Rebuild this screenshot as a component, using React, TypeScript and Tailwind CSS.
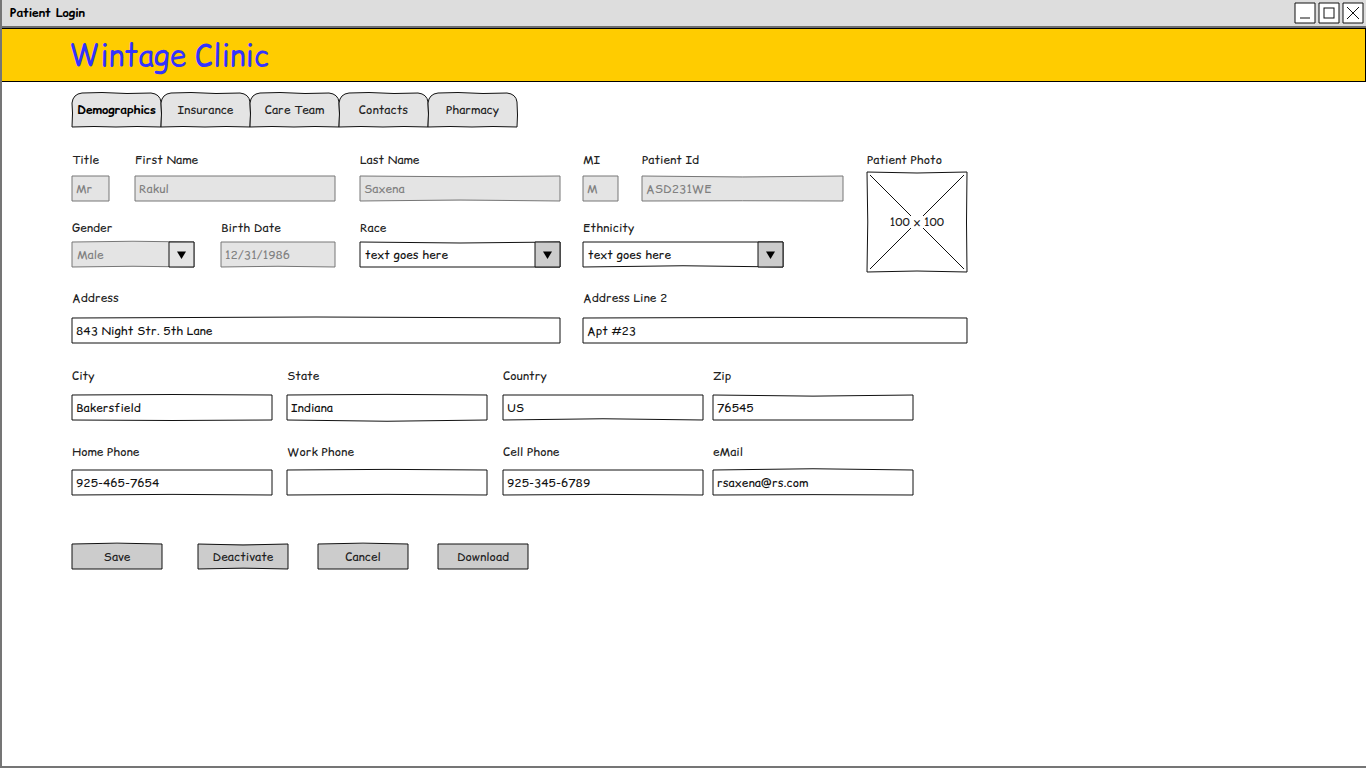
import React, { useId } from "react";

type Bow = [number, number];

type SketchFrameProps = { bow?: Bow; stroke?: string };

/* Hand-drawn outline: the top and bottom strokes bend by the given percentages. */
function SketchFrame({ bow = [0, 0], stroke = "#111111" }: SketchFrameProps) {
  const [top, bottom] = bow;
  return (
    <svg
      aria-hidden="true"
      viewBox="0 0 100 100"
      preserveAspectRatio="none"
      className="pointer-events-none absolute inset-0 h-full w-full overflow-visible"
    >
      <path
        d={`M0 0Q50 ${top} 100 0V100Q50 ${100 + bottom} 0 100Z`}
        fill="none"
        stroke={stroke}
        vectorEffect="non-scaling-stroke"
      />
    </svg>
  );
}

type FieldProps = {
  label: string;
  value: string;
  gap?: string;
  className?: string;
  disabled?: boolean;
  bow?: Bow;
};

function TextField({ label, value, gap = "gap-3", className = "", disabled = false, bow }: FieldProps) {
  const id = useId();
  return (
    <div className={`flex min-w-0 flex-col ${gap} ${className}`}>
      <label htmlFor={id} className="h-4 whitespace-nowrap leading-4">
        {label}
      </label>
      <div className="relative h-[25px]">
        <input
          id={id}
          type="text"
          defaultValue={value}
          disabled={disabled}
          className="block h-full w-full bg-white px-1 text-[#111111] outline-none disabled:bg-[#e4e4e4] disabled:text-[#808080]"
        />
        <SketchFrame bow={bow} stroke={disabled ? "#777777" : "#111111"} />
      </div>
    </div>
  );
}

function SelectField({ label, value, gap = "gap-1.5", className = "", disabled = false, bow }: FieldProps) {
  const id = useId();
  return (
    <div className={`flex min-w-0 flex-col ${gap} ${className}`}>
      <label htmlFor={id} className="h-4 whitespace-nowrap leading-4">
        {label}
      </label>
      <div className="relative h-[25px]">
        <select
          id={id}
          disabled={disabled}
          className="block h-full w-full appearance-none bg-white pl-[5px] pr-7 text-[#111111] opacity-100 outline-none disabled:bg-[#e4e4e4] disabled:text-[#808080]"
        >
          <option>{value}</option>
        </select>
        <SketchFrame bow={bow} stroke={disabled ? "#777777" : "#111111"} />
        <span
          className={`pointer-events-none absolute inset-y-0 right-0 flex w-[25px] items-center justify-center ${
            disabled ? "bg-[#e4e4e4]" : "bg-[#cccccc]"
          }`}
        >
          <svg aria-hidden="true" viewBox="0 0 9 8" className="h-2 w-[9px]">
            <path d="M0 0.5H9L4.5 8Z" fill="#000000" />
          </svg>
          <SketchFrame />
        </span>
      </div>
    </div>
  );
}

function Tab({ label, active = false }: { label: string; active?: boolean }) {
  return (
    <button
      type="button"
      role="tab"
      aria-selected={active}
      className={`relative h-[34px] w-[89px] rounded-t-[10px] bg-[#e4e4e4] text-center ${
        active ? "font-bold text-black" : ""
      }`}
    >
      {label}
      <svg
        aria-hidden="true"
        viewBox="0 0 89 34"
        className="pointer-events-none absolute inset-0 h-full w-full overflow-visible"
      >
        <path
          d="M0 34L0.5 20L0 10Q1 1 10 0L30 -0.5L55 0.5L79 0Q88 1 89 9L89.5 22L89 34L65 33.5L44 34L22 33.5Z"
          fill="none"
          stroke="#111111"
        />
      </svg>
    </button>
  );
}

function ActionButton({ label, bow }: { label: string; bow?: Bow }) {
  return (
    <button type="button" className="relative h-[25px] w-[90px] bg-[#cccccc] text-center">
      {label}
      <SketchFrame bow={bow} />
    </button>
  );
}

function WindowButton({ label, children }: { label: string; children: React.ReactNode }) {
  return (
    <button type="button" aria-label={label} className="relative h-5 w-5 bg-white">
      <svg viewBox="0 0 20 20" className="h-5 w-5" fill="none" stroke="#111111">
        {children}
      </svg>
      <SketchFrame />
    </button>
  );
}

export default function App() {
  return (
    <div className="flex min-h-screen flex-col border-b-2 border-l-2 border-[#757575] bg-white font-['Comic_Relief','Comic_Sans_MS','Comic_Neue',Lato,sans-serif] text-xs text-[#222222]">
      <header className="flex h-7 items-center justify-between border-b-2 border-[#6e6e6e] bg-[#dddddd] pl-2 pr-[3px]">
        <span className="font-bold text-black">Patient Login</span>
        <div className="flex gap-1">
          <WindowButton label="Minimize">
            <path d="M5 15H15" />
          </WindowButton>
          <WindowButton label="Maximize">
            <rect x="5" y="5" width="10" height="10" />
          </WindowButton>
          <WindowButton label="Close">
            <path d="M4 4L16 16M16 4L4 16" />
          </WindowButton>
        </div>
      </header>

      <div className="flex h-[54px] items-center border border-l-0 border-black bg-[#ffcc00] pl-[67px]">
        <h1 className="text-3xl leading-10 text-[#3333ff]">Wintage Clinic</h1>
      </div>

      <main className="px-[70px] pt-[11px]">
        <div role="tablist" className="flex">
          <Tab label="Demographics" active />
          <Tab label="Insurance" />
          <Tab label="Care Team" />
          <Tab label="Contacts" />
          <Tab label="Pharmacy" />
        </div>

        <form className="mt-[25px]" onSubmit={(e) => e.preventDefault()}>
          <div className="grid max-w-[895px] grid-cols-[771fr_100fr] gap-6">
            <div className="flex flex-col gap-[19px]">
              <div className="grid grid-cols-[263fr_483fr] gap-[25px]">
                <div className="grid grid-cols-[37fr_200fr] gap-[26px]">
                  <TextField label="Title" value="Mr" gap="gap-2" disabled />
                  <TextField label="First Name" value="Rakul" gap="gap-2" disabled />
                </div>
                <div className="grid grid-cols-[200fr_260fr] gap-[23px]">
                  <TextField label="Last Name" value="Saxena" gap="gap-2" disabled bow={[6, -8]} />
                  <div className="grid grid-cols-[35fr_201fr] gap-6">
                    <TextField label="MI" value="M" gap="gap-2" disabled />
                    <TextField label="Patient Id" value="ASD231WE" gap="gap-2" disabled bow={[8, -2]} />
                  </div>
                </div>
              </div>
              <div className="grid grid-cols-[263fr_483fr] gap-[25px]">
                <div className="grid grid-cols-[122fr_114fr] gap-[27px]">
                  <SelectField label="Gender" value="Male" disabled bow={[-6, -6]} />
                  <TextField label="Birth Date" value="12/31/1986" gap="gap-1.5" disabled bow={[0, -6]} />
                </div>
                <div className="grid grid-cols-[200fr_260fr] gap-[23px]">
                  <SelectField label="Race" value="text goes here" bow={[8, 0]} />
                  <SelectField label="Ethnicity" value="text goes here" className="max-w-[200px]" bow={[0, -10]} />
                </div>
              </div>
            </div>
            <figure className="flex flex-col gap-1">
              <figcaption className="h-4 whitespace-nowrap">Patient Photo</figcaption>
              <div className="relative flex h-[100px] items-center justify-center">
                <svg
                  aria-hidden="true"
                  viewBox="0 0 100 100"
                  preserveAspectRatio="none"
                  className="absolute inset-0 h-full w-full overflow-visible"
                  fill="none"
                  stroke="#111111"
                >
                  <path d="M0 0Q50 2 100 0Q99 50 100 100Q50 98 0 100Q1.5 50 0 0Z" />
                  <path d="M3 3L97 97M97 3L3 97" />
                </svg>
                <span className="relative bg-white leading-3">100 x 100</span>
              </div>
            </figure>
          </div>

          <div className="mt-[18px] grid max-w-[895px] grid-cols-[488fr_384fr] gap-[23px]">
            <TextField label="Address" value="843 Night Str. 5th Lane" bow={[-8, 0]} />
            <TextField label="Address Line 2" value="Apt #23" bow={[-5, 0]} />
          </div>

          <div className="mt-[25px] grid max-w-[841px] grid-cols-[415fr_410fr] gap-4">
            <div className="grid grid-cols-2 gap-[15px]">
              <TextField label="City" value="Bakersfield" gap="gap-[11px]" bow={[-4, 4]} />
              <TextField label="State" value="Indiana" gap="gap-[11px]" bow={[-5, 10]} />
            </div>
            <div className="grid grid-cols-2 gap-2.5">
              <TextField label="Country" value="US" gap="gap-[11px]" bow={[0, -10]} />
              <TextField label="Zip" value="76545" gap="gap-[11px]" bow={[9, 0]} />
            </div>
          </div>

          <div className="mt-6 grid max-w-[841px] grid-cols-[415fr_410fr] gap-4">
            <div className="grid grid-cols-2 gap-[15px]">
              <TextField label="Home Phone" value="925-465-7654" gap="gap-2.5" bow={[0, -5]} />
              <TextField label="Work Phone" value="" gap="gap-2.5" bow={[-5, -5]} />
            </div>
            <div className="grid grid-cols-2 gap-2.5">
              <TextField label="Cell Phone" value="925-345-6789" gap="gap-2.5" bow={[0, -5]} />
              <TextField label="eMail" value="rsaxena@rs.com" gap="gap-2.5" bow={[-10, -3]} />
            </div>
          </div>

          <div className="mt-[49px] flex gap-9">
            <ActionButton label="Save" bow={[-7, 0]} />
            <div className="flex gap-[30px]">
              <ActionButton label="Deactivate" bow={[8, -7]} />
              <ActionButton label="Cancel" bow={[-7, 0]} />
              <ActionButton label="Download" />
            </div>
          </div>
        </form>
      </main>
    </div>
  );
}
